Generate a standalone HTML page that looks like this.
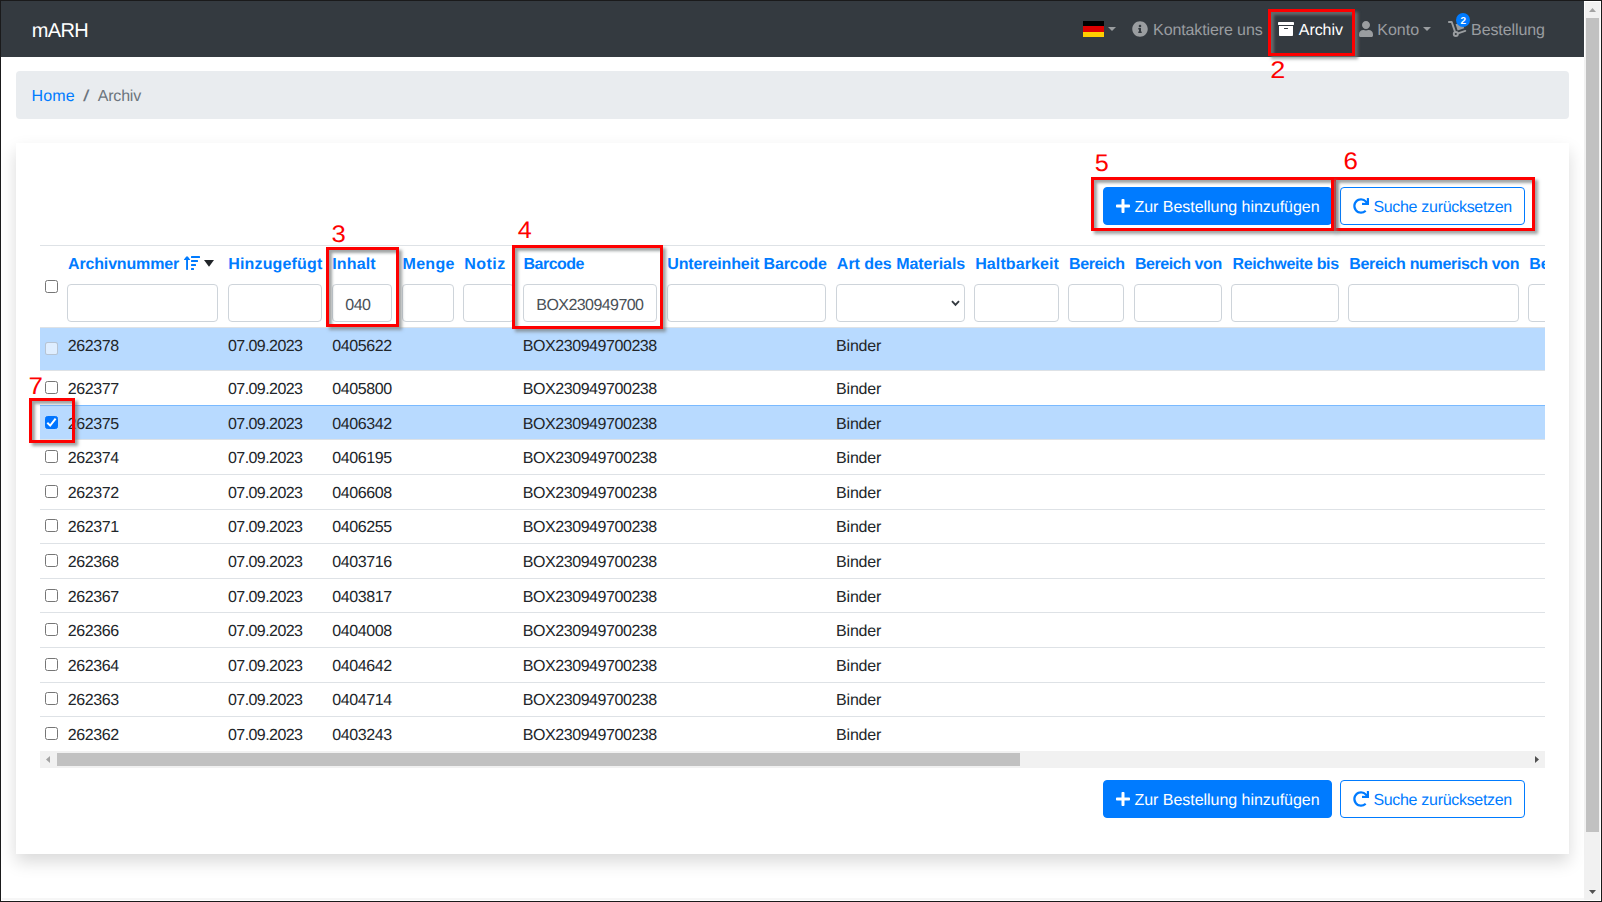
<!DOCTYPE html>
<html lang="de">
<head>
<meta charset="utf-8">
<title>mARH - Archiv</title>
<style>
html,body{margin:0;padding:0;}
body{width:1602px;height:902px;position:relative;overflow:hidden;background:#fff;font-family:"Liberation Sans",sans-serif;color:#212529;}
.abs,.t,.inp,.cb,.row,.rb,.btn{position:absolute;box-sizing:border-box;}
.t{white-space:nowrap;line-height:1;font-size:16px;text-rendering:geometricPrecision;}
.frame{left:0;top:0;width:1602px;height:902px;border:1px solid #1a1a1b;pointer-events:none;z-index:50;}
.nav{left:1px;top:1px;width:1583px;height:56px;background:#343a40;}
.vsb{left:1584px;top:1px;width:17px;height:900px;background:#f1f1f1;border:1px solid #fff;border-left:0;}
.vsb .th{position:absolute;left:2px;top:16px;width:13px;height:814px;background:#c1c1c1;}
.bc{left:16px;top:71px;width:1553px;height:48px;background:#e9ecef;border-radius:4px;}
.card{left:16px;top:143px;width:1553px;height:711px;background:#fff;box-shadow:0 8px 16px rgba(0,0,0,.15);}
.btn{height:38px;border-radius:4px;border:1px solid #007bff;}
.btn.p{background:#007bff;}
.btn.o{background:#fff;}
.tb{left:40px;top:245px;width:1505px;height:1px;background:#dee2e6;}
.inp{top:284px;height:38px;border:1px solid #ced4da;border-radius:4px;background:#fff;}
.clip{left:40px;top:246px;width:1505px;height:505px;overflow:hidden;}
.row{left:0;width:1505px;border-top:1px solid #dee2e6;}
.row.sel{background:#b8daff;}
.cb{left:5px;width:13px;height:13px;border:1px solid #767676;border-radius:2.5px;background:#fff;}
.cb.on{background:#0075ff;border-color:#0075ff;}
.cb.dis{background:rgba(255,255,255,.55);border-color:rgba(150,160,175,.55);}
.hsb{left:40px;top:751px;width:1505px;height:17px;background:#f1f1f1;}
.hsb .th{position:absolute;left:17px;top:2px;width:963px;height:13px;background:#c1c1c1;}
.rb{border:3px solid #fe0000;box-shadow:3px 3px 3px rgba(120,125,125,.7), inset 3px 3px 3px rgba(120,125,125,.7);z-index:20;}
.red{color:#fe0000;z-index:21;}
svg{position:absolute;overflow:visible;}
</style>
</head>
<body>

<div class="abs nav"></div>
<span class="t" style="left:31.63px;top:21.00px;font-size:20px;letter-spacing:-0.587px;color:#fff;">mARH</span>
<div class="abs" style="left:1083px;top:21px;width:21px;height:16px;background:linear-gradient(#000 0 33.4%,#dd0000 33.4% 66.7%,#ffce00 66.7% 100%);"></div>
<svg style="left:1108px;top:27px" width="8" height="4" viewBox="0 0 8 4"><path d="M0 0h8L4 4z" fill="#9a9da0"/></svg>
<svg style="left:1132px;top:21px" width="16" height="16" viewBox="0 0 512 512"><path fill="#9a9da0" d="M256 8C119.043 8 8 119.083 8 256c0 136.997 111.043 248 248 248s248-111.003 248-248C504 119.083 392.957 8 256 8zm0 110c23.196 0 42 18.804 42 42s-18.804 42-42 42-42-18.804-42-42 18.804-42 42-42zm56 254c0 6.627-5.373 12-12 12h-88c-6.627 0-12-5.373-12-12v-24c0-6.627 5.373-12 12-12h12v-64h-12c-6.627 0-12-5.373-12-12v-24c0-6.627 5.373-12 12-12h64c6.627 0 12 5.373 12 12v100h12c6.627 0 12 5.373 12 12v24z"/></svg>
<span class="t" style="left:1153.08px;top:23.00px;font-size:16px;letter-spacing:-0.112px;color:#9a9da0;">Kontaktiere uns</span>
<svg style="left:1278px;top:21px" width="16" height="16" viewBox="0 0 512 512"><path fill="#fff" d="M32 448c0 17.700 14.300 32 32 32h384c17.700 0 32-14.300 32-32V160H32v288zm160-212c0-6.600 5.400-12 12-12h104c6.600 0 12 5.400 12 12v8c0 6.600-5.400 12-12 12H204c-6.600 0-12-5.400-12-12v-8zM480 32H32C14.300 32 0 46.300 0 64v48c0 8.800 7.200 16 16 16h480c8.800 0 16-7.200 16-16V64c0-17.700-14.300-32-32-32z"/></svg>
<span class="t" style="left:1298.77px;top:23.00px;font-size:16px;letter-spacing:-0.060px;color:#fff;">Archiv</span>
<svg style="left:1359px;top:21px" width="14" height="16" viewBox="0 0 448 512"><path fill="#9a9da0" d="M224 256c70.700 0 128-57.300 128-128S294.700 0 224 0 96 57.300 96 128s57.300 128 128 128zm89.600 32h-16.700c-22.200 10.200-46.900 16-72.900 16s-50.600-5.800-72.900-16h-16.700C60.200 288 0 348.200 0 422.400V464c0 26.500 21.500 48 48 48h352c26.500 0 48-21.500 48-48v-41.600c0-74.200-60.200-134.400-134.400-134.400z"/></svg>
<span class="t" style="left:1377.27px;top:23.00px;font-size:16px;letter-spacing:0.012px;color:#9a9da0;">Konto</span>
<svg style="left:1423px;top:27px" width="8" height="4" viewBox="0 0 8 4"><path d="M0 0h8L4 4z" fill="#9a9da0"/></svg>
<svg style="left:1448px;top:21px" width="18" height="16" viewBox="0 0 18 16"><g fill="none" stroke="#9a9da0" stroke-width="1.9" stroke-linecap="round" stroke-linejoin="round"><path d="M0.900 0.950H3.700L7.000 10.600"/><path d="M10.000 12.300L17.300 9.900"/><circle cx="7.800" cy="13.000" r="2.050"/></g><path fill="#9a9da0" d="M7.600 3.200L14.200 1.000 16.200 7.200 9.600 9.400z"/></svg>
<div class="abs" style="left:1455.600px;top:12.900px;width:14.400px;height:14.400px;border-radius:7.200px;background:#007bff;"></div>
<span class="t" style="left:1460.59px;top:17.00px;font-size:10px;font-weight:700;letter-spacing:0.000px;color:#fff;">2</span>
<span class="t" style="left:1471.08px;top:23.00px;font-size:16px;letter-spacing:-0.103px;color:#9a9da0;">Bestellung</span>
<div class="abs vsb"><div class="th"></div><svg style="left:5px;top:6px" width="7" height="4" viewBox="0 0 7 4"><path d="M0 4h7L3.500 0z" fill="#a3a3a3"/></svg><svg style="left:5px;top:888px" width="7" height="4" viewBox="0 0 7 4"><path d="M0 0h7L3.500 4z" fill="#505050"/></svg><div style="position:absolute;left:0;top:0;width:1px;height:55px;background:#fff"></div></div>
<div class="abs bc"></div>
<span class="t" style="left:31.54px;top:89.00px;font-size:16px;letter-spacing:0.156px;color:#007bff;">Home</span>
<span class="t" style="left:84.07px;top:89.00px;font-size:16px;letter-spacing:0.000px;color:#6c757d;transform:scaleX(1.45);">/</span>
<span class="t" style="left:97.77px;top:89.00px;font-size:16px;letter-spacing:-0.200px;color:#6c757d;">Archiv</span>
<div class="abs card"></div>
<div class="btn p" style="left:1103px;top:187px;width:229px;"></div>
<svg style="left:1116px;top:198px" width="14" height="16" viewBox="0 0 448 512"><path fill="#fff" d="M416 208H272V64c0-17.670-14.330-32-32-32h-32c-17.670 0-32 14.330-32 32v144H32c-17.670 0-32 14.330-32 32v32c0 17.670 14.330 32 32 32h144v144c0 17.670 14.330 32 32 32h32c17.670 0 32-14.330 32-32V304h144c17.670 0 32-14.330 32-32v-32c0-17.670-14.330-32-32-32z"/></svg>
<span class="t" style="left:1134.41px;top:200.00px;font-size:16px;letter-spacing:-0.029px;color:#fff;margin-top:0px;">Zur Bestellung hinzufügen</span>
<div class="btn o" style="left:1340px;top:187px;width:185px;"></div>
<svg style="left:1353px;top:197.5px" width="16" height="16" viewBox="0 0 512 512"><path fill="#007bff" d="M500.330 0h-47.410a12 12 0 0 0-12 12.570l4 82.760A247.420 247.420 0 0 0 256 8C119.340 8 7.900 119.530 8 256.190 8.100 393.070 119.100 504 256 504a247.100 247.100 0 0 0 166.180-63.910 12 12 0 0 0 .480-17.430l-34-34a12 12 0 0 0-16.380-.550A176 176 0 1 1 402.100 157.800l-101.530-4.870a12 12 0 0 0-12.570 12v47.410a12 12 0 0 0 12 12h200.330a12 12 0 0 0 12-12V12a12 12 0 0 0-12-12z"/></svg>
<span class="t" style="left:1373.38px;top:200.00px;font-size:16px;letter-spacing:-0.307px;color:#007bff;margin-top:0px;">Suche zurücksetzen</span>
<div class="btn p" style="left:1103px;top:780px;width:229px;"></div>
<svg style="left:1116px;top:791px" width="14" height="16" viewBox="0 0 448 512"><path fill="#fff" d="M416 208H272V64c0-17.670-14.330-32-32-32h-32c-17.670 0-32 14.330-32 32v144H32c-17.670 0-32 14.330-32 32v32c0 17.670 14.330 32 32 32h144v144c0 17.670 14.330 32 32 32h32c17.670 0 32-14.330 32-32V304h144c17.670 0 32-14.330 32-32v-32c0-17.670-14.330-32-32-32z"/></svg>
<span class="t" style="left:1134.41px;top:200.00px;font-size:16px;letter-spacing:-0.029px;color:#fff;margin-top:593px;">Zur Bestellung hinzufügen</span>
<div class="btn o" style="left:1340px;top:780px;width:185px;"></div>
<svg style="left:1353px;top:790.5px" width="16" height="16" viewBox="0 0 512 512"><path fill="#007bff" d="M500.330 0h-47.410a12 12 0 0 0-12 12.570l4 82.760A247.420 247.420 0 0 0 256 8C119.340 8 7.900 119.530 8 256.190 8.100 393.070 119.100 504 256 504a247.100 247.100 0 0 0 166.180-63.910 12 12 0 0 0 .480-17.430l-34-34a12 12 0 0 0-16.380-.550A176 176 0 1 1 402.100 157.800l-101.530-4.870a12 12 0 0 0-12.570 12v47.410a12 12 0 0 0 12 12h200.330a12 12 0 0 0 12-12V12a12 12 0 0 0-12-12z"/></svg>
<span class="t" style="left:1373.38px;top:200.00px;font-size:16px;letter-spacing:-0.307px;color:#007bff;margin-top:593px;">Suche zurücksetzen</span>
<div class="abs tb"></div>
<div class="abs clip">
<span class="t" style="left:28.06px;top:11.00px;font-size:16px;font-weight:700;letter-spacing:-0.162px;color:#007bff;">Archivnummer</span>
<span class="t" style="left:188.21px;top:11.00px;font-size:16px;font-weight:700;letter-spacing:0.166px;color:#007bff;">Hinzugefügt</span>
<span class="t" style="left:292.21px;top:11.00px;font-size:16px;font-weight:700;letter-spacing:0.148px;color:#007bff;">Inhalt</span>
<span class="t" style="left:362.59px;top:11.00px;font-size:16px;font-weight:700;letter-spacing:0.273px;color:#007bff;">Menge</span>
<span class="t" style="left:424.21px;top:11.00px;font-size:16px;font-weight:700;letter-spacing:0.498px;color:#007bff;">Notiz</span>
<span class="t" style="left:483.59px;top:11.00px;font-size:16px;font-weight:700;letter-spacing:-0.543px;color:#007bff;">Barcode</span>
<span class="t" style="left:627.24px;top:11.00px;font-size:16px;font-weight:700;letter-spacing:-0.116px;color:#007bff;">Untereinheit Barcode</span>
<span class="t" style="left:796.86px;top:11.00px;font-size:16px;font-weight:700;letter-spacing:-0.037px;color:#007bff;">Art des Materials</span>
<span class="t" style="left:935.16px;top:11.00px;font-size:16px;font-weight:700;letter-spacing:0.110px;color:#007bff;">Haltbarkeit</span>
<span class="t" style="left:1029.08px;top:11.00px;font-size:16px;font-weight:700;letter-spacing:-0.441px;color:#007bff;">Bereich</span>
<span class="t" style="left:1094.98px;top:11.00px;font-size:16px;font-weight:700;letter-spacing:-0.439px;color:#007bff;">Bereich von</span>
<span class="t" style="left:1192.47px;top:11.00px;font-size:16px;font-weight:700;letter-spacing:-0.351px;color:#007bff;">Reichweite bis</span>
<span class="t" style="left:1309.21px;top:11.00px;font-size:16px;font-weight:700;letter-spacing:-0.334px;color:#007bff;">Bereich numerisch von</span>
<span class="t" style="left:1489.21px;top:11.00px;font-size:16px;font-weight:700;letter-spacing:-0.117px;color:#007bff;">Bereich numerisch bis</span>
<svg style="left:144px;top:10px" width="16" height="14" viewBox="0 0 16 14"><g fill="#007bff"><path d="M2.100 0.700L0 3.400Q-0.300 4 0.400 4H2.100V13.300Q2.100 14 2.800 14H3.300Q4 14 4 13.300V4H5.700Q6.400 4 6.100 3.400L4 0.700Q3.050 -0.400 2.100 0.700z"/><rect x="7" y="0" width="9" height="2" rx=".5"/><rect x="7" y="4" width="7" height="2" rx=".5"/><rect x="7" y="8" width="5" height="2" rx=".5"/><rect x="7" y="12" width="3" height="2" rx=".5"/></g></svg>
<svg style="left:164px;top:14px" width="10" height="7" viewBox="0 0 10 7"><path d="M0 0h10L5 6.700z" fill="#212529"/></svg>
<i class="cb" style="top:34px"></i>
<div class="inp" style="left:27px;top:38px;width:151px;"></div>
<div class="inp" style="left:188px;top:38px;width:94px;"></div>
<div class="inp" style="left:292px;top:38px;width:60px;"></div>
<div class="inp" style="left:362px;top:38px;width:52px;"></div>
<div class="inp" style="left:423px;top:38px;width:51px;"></div>
<div class="inp" style="left:483px;top:38px;width:134px;"></div>
<div class="inp" style="left:627px;top:38px;width:159px;"></div>
<div class="inp" style="left:796px;top:38px;width:129px;"></div>
<div class="inp" style="left:934px;top:38px;width:85px;"></div>
<div class="inp" style="left:1028px;top:38px;width:56px;"></div>
<div class="inp" style="left:1094px;top:38px;width:88px;"></div>
<div class="inp" style="left:1191px;top:38px;width:108px;"></div>
<div class="inp" style="left:1308px;top:38px;width:171px;"></div>
<div class="inp" style="left:1488px;top:38px;width:172px;"></div>
<span class="t" style="left:305.32px;top:52.00px;font-size:16px;letter-spacing:-0.585px;color:#495057;">040</span>
<span class="t" style="left:496.33px;top:52.00px;font-size:16px;letter-spacing:-0.569px;color:#495057;">BOX230949700</span>
<svg style="left:910.500px;top:54px" width="9" height="7" viewBox="0 0 9 7"><path d="M1 1.200L4.500 4.800 8 1.200" fill="none" stroke="#343a40" stroke-width="1.900"/></svg>
<div class="row sel" style="top:81px;height:43px;">
<i class="cb dis" style="top:14.0px"></i>
<span class="t" style="left:27.65px;top:11.00px;letter-spacing:-0.375px;">262378</span>
<span class="t" style="left:187.96px;top:11.00px;letter-spacing:-0.559px;">07.09.2023</span>
<span class="t" style="left:292.31px;top:11.00px;letter-spacing:-0.390px;">0405622</span>
<span class="t" style="left:482.78px;top:11.00px;letter-spacing:-0.436px;">BOX230949700238</span>
<span class="t" style="left:796.09px;top:11.00px;letter-spacing:-0.198px;">Binder</span>
</div>
<div class="row" style="top:124px;height:35px;">
<i class="cb" style="top:10.0px"></i>
<span class="t" style="left:27.65px;top:11.00px;letter-spacing:-0.375px;">262377</span>
<span class="t" style="left:187.96px;top:11.00px;letter-spacing:-0.559px;">07.09.2023</span>
<span class="t" style="left:292.31px;top:11.00px;letter-spacing:-0.390px;">0405800</span>
<span class="t" style="left:482.78px;top:11.00px;letter-spacing:-0.436px;">BOX230949700238</span>
<span class="t" style="left:796.09px;top:11.00px;letter-spacing:-0.198px;">Binder</span>
</div>
<div class="row sel" style="top:159px;height:34px;border-top-color:#7abaff;">
<i class="cb on" style="top:10.0px"><svg style="left:0;top:0" width="13" height="13" viewBox="0 0 13 13"><path d="M2.300 6.700L5.200 9.600 10.600 2.700" fill="none" stroke="#fff" stroke-width="2" transform="translate(-1 -1)"/></svg></i>
<span class="t" style="left:27.65px;top:11.00px;letter-spacing:-0.375px;">262375</span>
<span class="t" style="left:187.96px;top:11.00px;letter-spacing:-0.559px;">07.09.2023</span>
<span class="t" style="left:292.31px;top:11.00px;letter-spacing:-0.390px;">0406342</span>
<span class="t" style="left:482.78px;top:11.00px;letter-spacing:-0.436px;">BOX230949700238</span>
<span class="t" style="left:796.09px;top:11.00px;letter-spacing:-0.198px;">Binder</span>
</div>
<div class="row" style="top:193px;height:35px;">
<i class="cb" style="top:10.0px"></i>
<span class="t" style="left:27.65px;top:11.00px;letter-spacing:-0.375px;">262374</span>
<span class="t" style="left:187.96px;top:11.00px;letter-spacing:-0.559px;">07.09.2023</span>
<span class="t" style="left:292.31px;top:11.00px;letter-spacing:-0.390px;">0406195</span>
<span class="t" style="left:482.78px;top:11.00px;letter-spacing:-0.436px;">BOX230949700238</span>
<span class="t" style="left:796.09px;top:11.00px;letter-spacing:-0.198px;">Binder</span>
</div>
<div class="row" style="top:228px;height:35px;">
<i class="cb" style="top:10.0px"></i>
<span class="t" style="left:27.65px;top:11.00px;letter-spacing:-0.375px;">262372</span>
<span class="t" style="left:187.96px;top:11.00px;letter-spacing:-0.559px;">07.09.2023</span>
<span class="t" style="left:292.31px;top:11.00px;letter-spacing:-0.390px;">0406608</span>
<span class="t" style="left:482.78px;top:11.00px;letter-spacing:-0.436px;">BOX230949700238</span>
<span class="t" style="left:796.09px;top:11.00px;letter-spacing:-0.198px;">Binder</span>
</div>
<div class="row" style="top:263px;height:34px;">
<i class="cb" style="top:9.0px"></i>
<span class="t" style="left:27.65px;top:10.00px;letter-spacing:-0.375px;">262371</span>
<span class="t" style="left:187.96px;top:10.00px;letter-spacing:-0.559px;">07.09.2023</span>
<span class="t" style="left:292.31px;top:10.00px;letter-spacing:-0.390px;">0406255</span>
<span class="t" style="left:482.78px;top:10.00px;letter-spacing:-0.436px;">BOX230949700238</span>
<span class="t" style="left:796.09px;top:10.00px;letter-spacing:-0.198px;">Binder</span>
</div>
<div class="row" style="top:297px;height:35px;">
<i class="cb" style="top:10.0px"></i>
<span class="t" style="left:27.65px;top:11.00px;letter-spacing:-0.375px;">262368</span>
<span class="t" style="left:187.96px;top:11.00px;letter-spacing:-0.559px;">07.09.2023</span>
<span class="t" style="left:292.31px;top:11.00px;letter-spacing:-0.390px;">0403716</span>
<span class="t" style="left:482.78px;top:11.00px;letter-spacing:-0.436px;">BOX230949700238</span>
<span class="t" style="left:796.09px;top:11.00px;letter-spacing:-0.198px;">Binder</span>
</div>
<div class="row" style="top:332px;height:34px;">
<i class="cb" style="top:10.0px"></i>
<span class="t" style="left:27.65px;top:11.00px;letter-spacing:-0.375px;">262367</span>
<span class="t" style="left:187.96px;top:11.00px;letter-spacing:-0.559px;">07.09.2023</span>
<span class="t" style="left:292.31px;top:11.00px;letter-spacing:-0.390px;">0403817</span>
<span class="t" style="left:482.78px;top:11.00px;letter-spacing:-0.436px;">BOX230949700238</span>
<span class="t" style="left:796.09px;top:11.00px;letter-spacing:-0.198px;">Binder</span>
</div>
<div class="row" style="top:366px;height:35px;">
<i class="cb" style="top:10.0px"></i>
<span class="t" style="left:27.65px;top:11.00px;letter-spacing:-0.375px;">262366</span>
<span class="t" style="left:187.96px;top:11.00px;letter-spacing:-0.559px;">07.09.2023</span>
<span class="t" style="left:292.31px;top:11.00px;letter-spacing:-0.390px;">0404008</span>
<span class="t" style="left:482.78px;top:11.00px;letter-spacing:-0.436px;">BOX230949700238</span>
<span class="t" style="left:796.09px;top:11.00px;letter-spacing:-0.198px;">Binder</span>
</div>
<div class="row" style="top:401px;height:35px;">
<i class="cb" style="top:10.0px"></i>
<span class="t" style="left:27.65px;top:11.00px;letter-spacing:-0.375px;">262364</span>
<span class="t" style="left:187.96px;top:11.00px;letter-spacing:-0.559px;">07.09.2023</span>
<span class="t" style="left:292.31px;top:11.00px;letter-spacing:-0.390px;">0404642</span>
<span class="t" style="left:482.78px;top:11.00px;letter-spacing:-0.436px;">BOX230949700238</span>
<span class="t" style="left:796.09px;top:11.00px;letter-spacing:-0.198px;">Binder</span>
</div>
<div class="row" style="top:436px;height:34px;">
<i class="cb" style="top:9.0px"></i>
<span class="t" style="left:27.65px;top:10.00px;letter-spacing:-0.375px;">262363</span>
<span class="t" style="left:187.96px;top:10.00px;letter-spacing:-0.559px;">07.09.2023</span>
<span class="t" style="left:292.31px;top:10.00px;letter-spacing:-0.390px;">0404714</span>
<span class="t" style="left:482.78px;top:10.00px;letter-spacing:-0.436px;">BOX230949700238</span>
<span class="t" style="left:796.09px;top:10.00px;letter-spacing:-0.198px;">Binder</span>
</div>
<div class="row" style="top:470px;height:35px;">
<i class="cb" style="top:10.0px"></i>
<span class="t" style="left:27.65px;top:11.00px;letter-spacing:-0.375px;">262362</span>
<span class="t" style="left:187.96px;top:11.00px;letter-spacing:-0.559px;">07.09.2023</span>
<span class="t" style="left:292.31px;top:11.00px;letter-spacing:-0.390px;">0403243</span>
<span class="t" style="left:482.78px;top:11.00px;letter-spacing:-0.436px;">BOX230949700238</span>
<span class="t" style="left:796.09px;top:11.00px;letter-spacing:-0.198px;">Binder</span>
</div>
</div>
<div class="abs hsb"><div class="th"></div><svg style="left:6px;top:5px" width="4" height="7" viewBox="0 0 4 7"><path d="M4 0v7L0 3.500z" fill="#a3a3a3"/></svg><svg style="left:1495px;top:5px" width="4" height="7" viewBox="0 0 4 7"><path d="M0 0v7L4 3.500z" fill="#505050"/></svg></div>
<div class="rb" style="left:1268px;top:9px;width:87px;height:47px;"></div>
<div class="rb" style="left:326px;top:247px;width:73px;height:80px;"></div>
<div class="rb" style="left:512px;top:245px;width:151px;height:84px;"></div>
<div class="rb" style="left:1333px;top:177px;width:202px;height:54px;"></div>
<div class="rb" style="left:1091px;top:177px;width:243px;height:54px;"></div>
<div class="rb" style="left:29px;top:398px;width:46px;height:45px;"></div>
<span class="t red" style="left:1270.52px;top:59.00px;font-size:24px;letter-spacing:0.000px;color:#fe0000;transform:scaleX(1.13);">2</span>
<span class="t red" style="left:331.76px;top:223.00px;font-size:24px;letter-spacing:0.000px;color:#fe0000;transform:scaleX(1.07);">3</span>
<span class="t red" style="left:517.63px;top:219.00px;font-size:24px;letter-spacing:0.000px;color:#fe0000;transform:scaleX(1.05);">4</span>
<span class="t red" style="left:1094.71px;top:152.00px;font-size:24px;letter-spacing:0.000px;color:#fe0000;transform:scaleX(1.05);">5</span>
<span class="t red" style="left:1343.61px;top:150.00px;font-size:24px;letter-spacing:0.000px;color:#fe0000;transform:scaleX(1.08);">6</span>
<span class="t red" style="left:28.76px;top:375.00px;font-size:24px;letter-spacing:0.000px;color:#fe0000;transform:scaleX(1.08);">7</span>
<div class="abs" style="left:2px;top:898px;width:1582px;height:2px;background:#f6f6f6;"></div>
<div class="abs frame"></div>
</body>
</html>
